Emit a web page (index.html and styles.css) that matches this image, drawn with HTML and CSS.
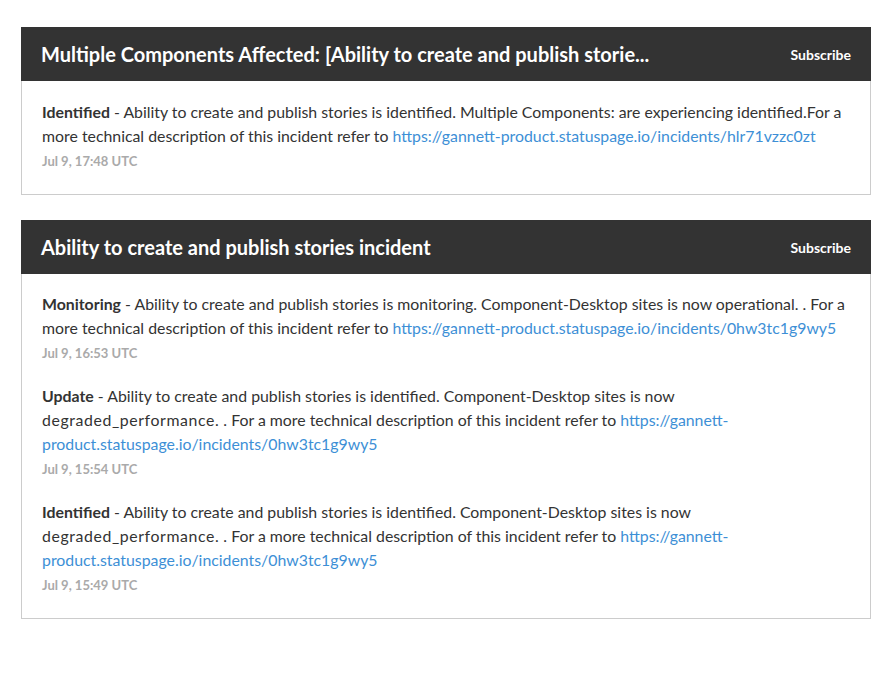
FILE: index.html
```html
<!DOCTYPE html>
<html>
<head>
<meta charset="utf-8">
<link rel="stylesheet" href="styles.css">
</head>
<body>
<div class="page">
  <div class="card">
    <div class="card-head">
      <h2 class="title">Multiple Components Affected: [Ability to create and publish storie...</h2>
      <a class="subscribe">Subscribe</a>
    </div>
    <div class="card-body">
      <div class="update">
        <p class="text"><strong>Identified</strong> - Ability to create and publish stories is identified. Multiple Components: are experiencing identified.For a more technical description of this incident refer to <a class="link">https://gannett-product.statuspage.io/incidents/hlr71vzzc0zt</a></p>
        <p class="time">Jul 9, 17:48 UTC</p>
      </div>
    </div>
  </div>
  <div class="card">
    <div class="card-head">
      <h2 class="title">Ability to create and publish stories incident</h2>
      <a class="subscribe">Subscribe</a>
    </div>
    <div class="card-body">
      <div class="update">
        <p class="text"><strong>Monitoring</strong> - Ability to create and publish stories is monitoring. Component-Desktop sites is now operational. . For a more technical description of this incident refer to <a class="link">https://gannett-product.statuspage.io/incidents/0hw3tc1g9wy5</a></p>
        <p class="time">Jul 9, 16:53 UTC</p>
      </div>
      <div class="update">
        <p class="text"><strong>Update</strong> - Ability to create and publish stories is identified. Component-Desktop sites is now <span class="term">degraded_performance.</span> . For a more technical description of this incident refer to <a class="link">https://gannett-product.statuspage.io/incidents/0hw3tc1g9wy5</a></p>
        <p class="time">Jul 9, 15:54 UTC</p>
      </div>
      <div class="update">
        <p class="text"><strong>Identified</strong> - Ability to create and publish stories is identified. Component-Desktop sites is now <span class="term">degraded_performance.</span> . For a more technical description of this incident refer to <a class="link">https://gannett-product.statuspage.io/incidents/0hw3tc1g9wy5</a></p>
        <p class="time">Jul 9, 15:49 UTC</p>
      </div>
    </div>
  </div>
</div>
</body>
</html>
```

FILE: styles.css
```css
* { box-sizing: border-box; }
body {
  margin: 0;
  background: #fff;
  font-family: Lato, "Open Sans", sans-serif;
  color: #333;
}
.page {
  padding: 27px 15px 0 21px;
  display: flex;
  flex-direction: column;
  gap: 25px;
}
.card {
  width: 850px;
}
.card-head {
  background: #333;
  height: 54px;
  padding: 0 20px 0 20px;
  display: flex;
  align-items: center;
  justify-content: space-between;
}
.title {
  margin: 0;
  color: #fff;
  font-size: 20px;
  font-weight: 700;
  white-space: nowrap;
}
.subscribe {
  color: #fff;
  font-size: 14px;
  font-weight: 700;
}
.card-body {
  border: 1px solid #ccc;
  border-top: none;
  padding: 18px 20px 23px 20px;
  display: flex;
  flex-direction: column;
  gap: 21px;
}
.card:first-child .card-body {
  padding-top: 19px;
}
.text {
  margin: 0;
  font-size: 15.85px;
  line-height: 24px;
  color: #333;
}
.text strong { font-weight: 700; color: #333; }
.term { letter-spacing: 0.6px; }
.link { color: #3d8fd6; }
.time {
  margin: 3px 0 0 0;
  font-size: 13px;
  line-height: 20px;
  font-weight: 700;
  color: #aaa;
}
```
